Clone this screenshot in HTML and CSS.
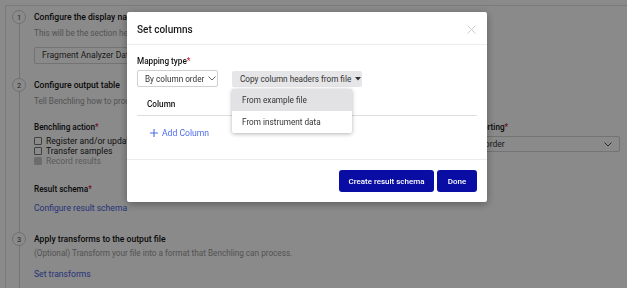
FILE: index.html
```html
<!DOCTYPE html>
<html lang="en">
<head>
  <meta charset="UTF-8" />
  <title>Set columns</title>
  <link rel="stylesheet" href="styles.css">
</head>
<body>
  <div class="card">
    <section class="step step-one">
      <div class="rail"><span class="step-num">1</span></div>
      <div class="step-body">
        <div class="step-title">Configure the display name</div>
        <div class="step-desc">This will be the section header shown in the notebook entry.</div>
        <div class="text-input">Fragment Analyzer Data</div>
      </div>
    </section>

    <section class="step step-two">
      <div class="rail"><span class="step-num">2</span></div>
      <div class="step-body">
        <div class="step-title">Configure output table</div>
        <div class="step-desc">Tell Benchling how to process the rows of your file.</div>
        <div class="field-row">
          <div class="field-col">
            <div class="field-label">Benchling action<span class="req">*</span></div>
            <label class="check"><span class="box"></span>Register and/or update entities</label>
            <label class="check"><span class="box"></span>Transfer samples</label>
            <label class="check disabled"><span class="box checked"></span>Record results</label>
            <div class="field-label spaced">Result schema<span class="req">*</span></div>
            <a class="link" href="#">Configure result schema</a>
          </div>
          <div class="field-col right">
            <div class="field-label">Sample sorting<span class="req">*</span></div>
            <div class="wide-select">
              <span>Column order</span>
              <svg width="8" height="5" viewBox="0 0 8 5"><path d="M0.5 0.5 L4 4 L7.5 0.5" fill="none" stroke="#555" stroke-width="1"/></svg>
            </div>
          </div>
        </div>
      </div>
    </section>

    <section class="step step-three">
      <div class="rail"><span class="step-num">3</span></div>
      <div class="step-body">
        <div class="step-title">Apply transforms to the output file</div>
        <div class="step-desc tight">(Optional) Transform your file into a format that Benchling can process.</div>
        <a class="link transforms" href="#">Set transforms</a>
      </div>
    </section>
  </div>

  <div class="backdrop"></div>

  <div class="modal">
    <div class="modal-header">
      <span class="modal-title">Set columns</span>
      <svg class="close" width="9" height="9" viewBox="0 0 9 9"><path d="M0.5 0.5 L8.5 8.5 M8.5 0.5 L0.5 8.5" stroke="#cccccc" stroke-width="1"/></svg>
    </div>
    <div class="modal-body">
      <div class="field-label">Mapping type<span class="req">*</span></div>
      <div class="mapping-row">
        <div class="select">
          <span>By column order</span>
          <svg width="8" height="5" viewBox="0 0 8 5"><path d="M0.5 0.5 L4 4 L7.5 0.5" fill="none" stroke="#666" stroke-width="1"/></svg>
        </div>
        <div class="copy-wrap">
          <div class="copy-btn">
            <span>Copy column headers from file</span>
            <svg width="6" height="4" viewBox="0 0 6 4"><path d="M0 0 L6 0 L3 3.5 Z" fill="#333"/></svg>
          </div>
          <div class="menu">
            <div class="menu-item active">From example file</div>
            <div class="menu-item">From instrument data</div>
          </div>
        </div>
      </div>
      <div class="table-head">Column</div>
      <a class="add-col" href="#">
        <svg width="8" height="8" viewBox="0 0 8 8"><path d="M4 0 V8 M0 4 H8" stroke="#4d6be8" stroke-width="1.1"/></svg>
        Add Column
      </a>
    </div>
    <div class="modal-footer">
      <button class="primary create">Create result schema</button>
      <button class="primary done">Done</button>
    </div>
  </div>
</body>
</html>
```

FILE: styles.css
```css
* { box-sizing: border-box; }

body {
  margin: 0;
  font-family: 'Roboto', sans-serif;
  font-size: 8.2px;
  color: #1c1c1c;
  background: #ffffff;
  overflow: hidden;
  height: 288px;
}

.card {
  margin: 5px 0 0 5px;
  border-left: 1px solid #e2e2e2;
  border-top: 1px solid #e2e2e2;
  padding: 4px 0 0 6px;
}

.step {
  display: flex;
  gap: 8px;
}

.step-one { height: 68px; }
.step-two { height: 154px; }
.step-three { height: 56px; }

.rail {
  width: 14px;
  display: flex;
  flex-direction: column;
  align-items: center;
}

.rail::after {
  content: "";
  flex: 1;
  width: 1px;
  background: #d6d6d6;
}

.step-num {
  width: 14px;
  height: 14px;
  border: 1px solid #cfcfcf;
  border-radius: 50%;
  display: flex;
  align-items: center;
  justify-content: center;
  font-size: 7.5px;
  color: #444;
}

.step-body { flex: 1; }

.step-title {
  font-weight: 500;
  line-height: 14px;
  font-size: 8.6px;
  color: #111;
}

.step-desc {
  margin-top: 3px;
  line-height: 12px;
  color: #999;
}

.step-desc.tight { margin-top: 1px; }

.text-input {
  margin-top: 8px;
  width: 200px;
  height: 17px;
  border: 1px solid #d4d4d4;
  border-radius: 2px;
  padding-left: 7px;
  line-height: 15px;
  font-size: 8.6px;
  color: #333;
}

.field-row {
  display: flex;
  margin-top: 14px;
}

.field-col { width: 400px; }

.field-col.right {
  width: 171px;
  margin-left: 15px;
}

.field-label {
  font-weight: 500;
  line-height: 12px;
  color: #111;
}

.field-label.spaced { margin-top: 17px; }

.req { color: #d0243a; }

.check {
  display: flex;
  align-items: center;
  gap: 4px;
  line-height: 10px;
  font-size: 8.6px;
}

.field-label + .check { margin-top: 3px; }

.box {
  width: 8px;
  height: 8px;
  border: 1px solid #777;
  border-radius: 1px;
}

.box.checked {
  background: #c9c9c9;
  border-color: #c9c9c9;
}

.check.disabled { color: #aaa; }

.link {
  display: block;
  margin-top: 7px;
  line-height: 12px;
  font-size: 8.6px;
  color: #4560e0;
  text-decoration: none;
}

.link.transforms { margin-top: 9px; }

.wide-select {
  margin-top: 3px;
  height: 16px;
  border: 1px solid #d4d4d4;
  border-radius: 2px;
  display: flex;
  align-items: center;
  justify-content: space-between;
  padding: 0 7px 0 3px;
  font-size: 8.6px;
  color: #333;
}

.backdrop {
  position: fixed;
  inset: 0;
  background: rgba(0, 0, 0, 0.46);
}

.modal {
  position: fixed;
  left: 127px;
  top: 12px;
  width: 360px;
  height: 190px;
  background: #fff;
  border-radius: 2px;
  box-shadow: 0 2px 8px rgba(0, 0, 0, 0.35);
  display: flex;
  flex-direction: column;
}

.modal-header {
  height: 33px;
  border-bottom: 1px solid #ececec;
  display: flex;
  align-items: center;
  justify-content: space-between;
  padding: 3px 11px 0 10px;
}

.modal-title {
  font-size: 10px;
  font-weight: 500;
  color: #1a1a1a;
}

.modal-body {
  flex: 1;
  padding: 10px 10px 0;
  border-bottom: 1px solid #ececec;
}

.mapping-row {
  display: flex;
  gap: 14px;
  margin-top: 3px;
}

.select {
  width: 81px;
  height: 17px;
  border: 1px solid #cfcfcf;
  border-radius: 2px;
  display: flex;
  align-items: center;
  gap: 4px;
  padding-left: 7px;
  color: #333;
}

.copy-wrap { position: relative; }

.copy-btn {
  margin-top: 1px;
  width: 130px;
  height: 16px;
  background: #e6e6e8;
  border-radius: 2px;
  display: flex;
  align-items: center;
  gap: 4px;
  padding-left: 8px;
  color: #333;
}

.menu {
  position: absolute;
  top: 19px;
  left: 0;
  width: 120px;
  background: #fff;
  border-radius: 2px;
  box-shadow: 0 1px 4px rgba(0, 0, 0, 0.3);
  z-index: 2;
}

.menu-item {
  height: 22px;
  line-height: 22px;
  padding-left: 10px;
  color: #333;
}

.menu-item.active { background: #e2e2e4; }

.table-head {
  margin-top: 11px;
  height: 18px;
  padding-left: 10px;
  border-bottom: 1px solid #dedede;
  line-height: 12px;
  font-weight: 500;
  color: #111;
}

.add-col {
  display: flex;
  align-items: center;
  gap: 4px;
  margin: 12px 0 0 13px;
  color: #4d6be8;
  font-size: 8.6px;
  text-decoration: none;
}

.modal-footer {
  height: 42px;
  display: flex;
  justify-content: flex-end;
  align-items: center;
  gap: 3px;
  padding-right: 10px;
}

.primary {
  height: 22px;
  border: none;
  border-radius: 3px;
  background: #0a0da3;
  color: #fff;
  font-family: 'Roboto', sans-serif;
  font-size: 8px;
  font-weight: 500;
  padding: 0;
}

.create { width: 95px; }
.done { width: 40px; }
```
